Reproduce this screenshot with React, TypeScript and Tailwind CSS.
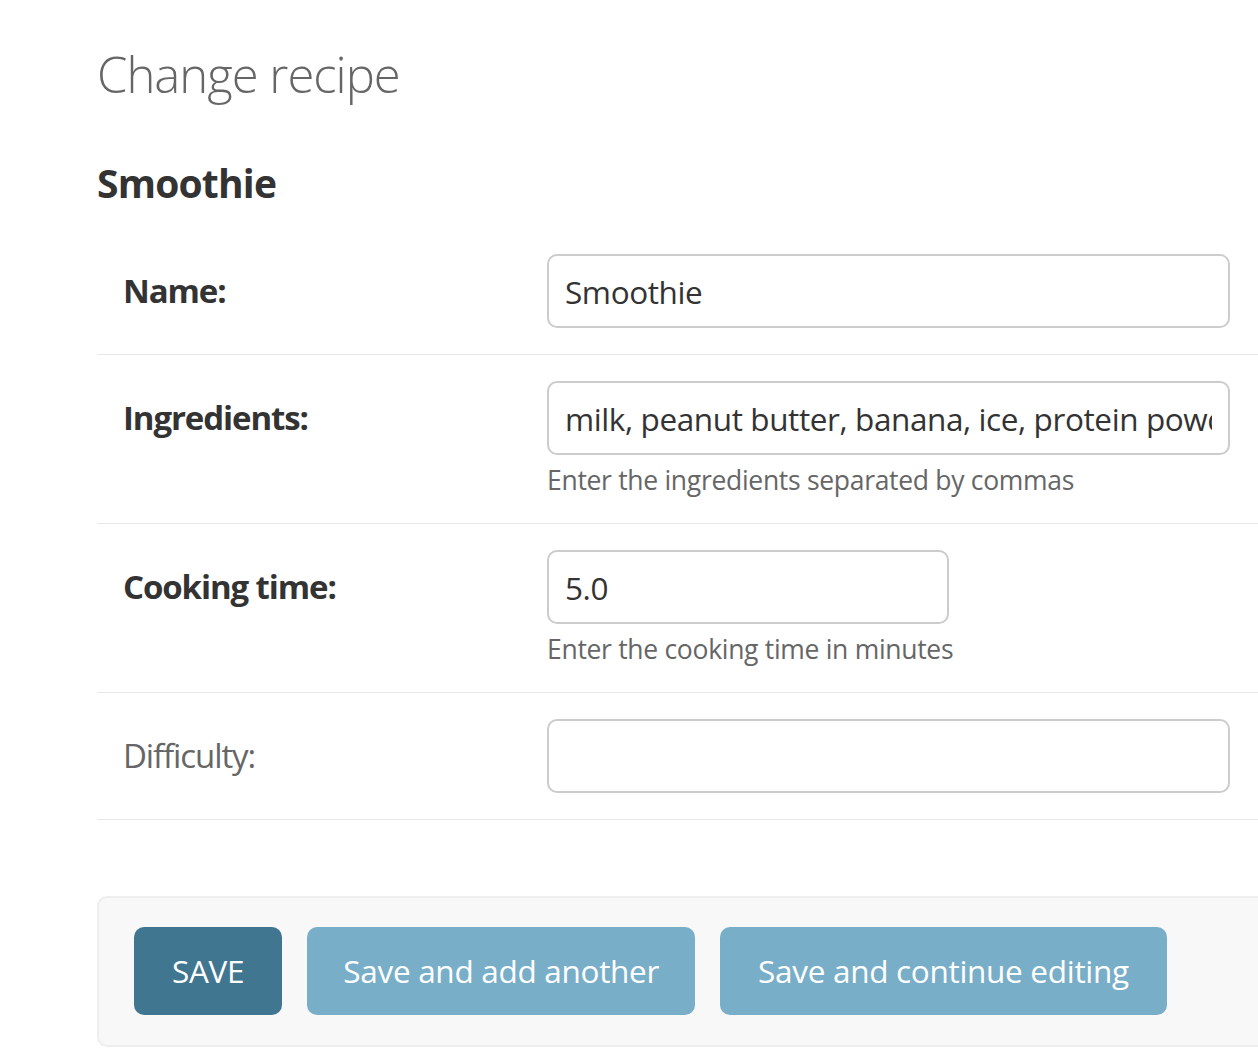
import React from 'react';

const font = { fontFamily: '"Open Sans", "Noto Sans", sans-serif' };

function Row({ label, bold = true, value, help, inputClass }) {
  return (
    <div className="flex border-b border-[#e8e8e8] pt-[26px] pb-[26px]">
      <label
        className={
          'w-[450px] shrink-0 pl-[26px] pt-[19px] text-[33px] leading-[36px] tracking-[-1.1px] ' +
          (bold ? 'font-bold text-[#333]' : 'font-normal text-[#666]')
        }
      >
        {label}
      </label>
      <div className="flex flex-col">
        <input
          readOnly
          value={value}
          className={
            'h-[74px] rounded-[10px] border-2 border-[#ccc] bg-white px-[16px] text-[31.5px] tracking-[-0.4px] text-[#333] outline-none ' +
            inputClass
          }
          style={font}
        />
        {help && (
          <p className="mt-[9px] text-[26.5px] leading-[33px] tracking-[-0.3px] text-[#666]">{help}</p>
        )}
      </div>
    </div>
  );
}

export default function App() {
  return (
    <div className="h-[1062px] w-[1258px] overflow-hidden bg-white pl-[97px]" style={font}>
      <div className="w-[1300px]">
        <h1 className="pt-[42px] text-[49px] font-light leading-[64px] tracking-[-1px] text-[#666]">
          Change recipe
        </h1>

        {/* fieldset */}
        <h2 className="mt-[51px] text-[39px] font-bold leading-[52px] tracking-[-0.8px] text-[#333]">Smoothie</h2>
        <div className="mt-[19px]">
          <Row label="Name:" value="Smoothie" inputClass="w-[683px]" />
          <Row
            label="Ingredients:"
            value="milk, peanut butter, banana, ice, protein powder"
            help="Enter the ingredients separated by commas"
            inputClass="w-[683px]"
          />
          <Row
            label="Cooking time:"
            value="5.0"
            help="Enter the cooking time in minutes"
            inputClass="w-[402px]"
          />
          <Row label="Difficulty:" bold={false} value="" inputClass="w-[683px]" />
        </div>

        {/* submit row */}
        <div className="mt-[76px] flex gap-[25px] rounded-[10px] border-2 border-[#eee] bg-[#f8f8f8] px-[35px] pt-[29px] pb-[30px]">
          <button className="h-[88px] rounded-[10px] bg-[#417690] px-[38px] text-[31.5px] tracking-[-0.3px] text-white">
            SAVE
          </button>
          <button className="h-[88px] rounded-[10px] bg-[#79aec8] px-[36px] text-[31.5px] tracking-[-0.3px] text-white">
            Save and add another
          </button>
          <button className="h-[88px] rounded-[10px] bg-[#79aec8] px-[38px] text-[31.5px] tracking-[-0.3px] text-white">
            Save and continue editing
          </button>
        </div>
      </div>
    </div>
  );
}
